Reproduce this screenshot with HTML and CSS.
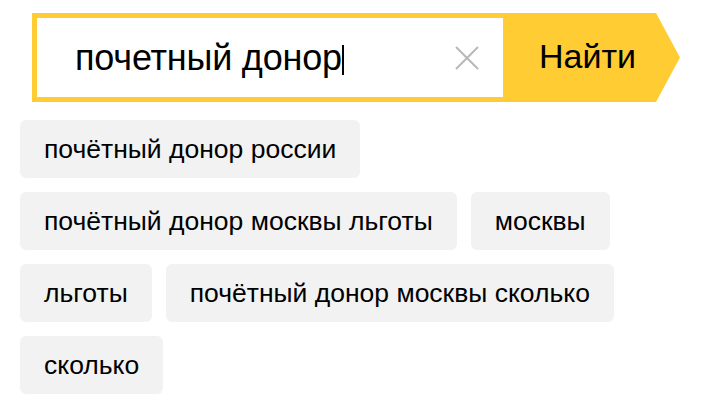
FILE: index.html
```html
<!DOCTYPE html>
<html lang="ru">
<head>
  <meta charset="UTF-8">
  <meta name="viewport" content="width=device-width, initial-scale=1.0">
  <title>Поиск</title>
  <link rel="stylesheet" href="styles.css">
</head>
<body>
  <div class="page">
    <form class="search" onsubmit="return false">
      <div class="search-box">
        <span class="query">почетный донор</span><span class="caret"></span>
        <button type="button" class="clear" aria-label="Очистить">
          <svg width="24" height="24" viewBox="0 0 24 24">
            <path d="M1 1 L23 23 M23 1 L1 23" stroke="#b8b8b8" stroke-width="2" fill="none"/>
          </svg>
        </button>
      </div>
      <button type="submit" class="search-btn">Найти</button>
    </form>
    <div class="suggest">
      <a class="chip" href="#">почётный донор россии</a>
      <a class="chip" href="#">почётный донор москвы льготы</a>
      <a class="chip" href="#">москвы</a>
      <a class="chip" href="#">льготы</a>
      <a class="chip" href="#">почётный донор москвы сколько</a>
      <a class="chip" href="#">сколько</a>
    </div>
  </div>
</body>
</html>
```

FILE: styles.css
```css
body {
    margin: 0;
    padding: 0;
    background: #fff;
    font-family: 'Liberation Sans', Arial, sans-serif;
    color: #000;
}
.page {
    padding: 13px 0 0 20px;
}
.search {
    display: flex;
    margin-left: 12px;
    height: 89px;
}
.search-box {
    width: 471px;
    border: 5px solid #fc3;
    border-right: none;
    display: flex;
    align-items: center;
    padding-left: 38px;
    box-sizing: border-box;
}
.query {
    font-size: 36px;
    letter-spacing: -0.2px;
}
.caret {
    width: 2px;
    height: 30px;
    background: #000;
    margin-left: 0;
    margin-top: 4px;
}
.clear {
    margin-left: auto;
    margin-right: 24px;
    padding: 0;
    border: none;
    background: none;
    display: flex;
    cursor: pointer;
}
.search-btn {
    width: 177px;
    border: none;
    background: #fc3;
    clip-path: polygon(0 0, 153px 0, 100% 50%, 153px 100%, 0 100%);
    font-family: inherit;
    font-size: 34px;
    color: #000;
    text-align: left;
    padding: 0 0 2px 36px;
    cursor: pointer;
}
.suggest {
    display: flex;
    flex-wrap: wrap;
    gap: 14px;
    margin-top: 18px;
    max-width: 640px;
}
.chip {
    display: flex;
    align-items: center;
    height: 58px;
    padding: 0 24px;
    box-sizing: border-box;
    border-radius: 6px;
    background: #f2f2f2;
    color: #000;
    text-decoration: none;
    font-size: 26.5px;
}
```
